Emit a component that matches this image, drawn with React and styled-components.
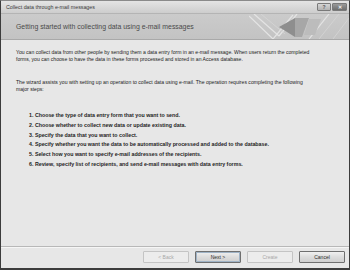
import styled, { createGlobalStyle } from 'styled-components'

const GlobalStyle = createGlobalStyle`
    html, body {
        margin: 0;
        padding: 0;
        background: #ffffff;
    }
`

const Window = styled.div`
    width: 350px;
    height: 270px;
    box-sizing: border-box;
    border: 1px solid #3c3c3c;
    border-top-color: #8a8a8a;
    border-bottom-width: 2px;
    background: #e7e7e7;
    display: flex;
    flex-direction: column;
    font-family: "Liberation Sans", Arial, sans-serif;
    overflow: hidden;
`

const TitleBar = styled.div`
    height: 12px;
    flex: none;
    display: flex;
    align-items: center;
    justify-content: space-between;
    padding: 0 2px 0 5px;
    background: linear-gradient(#e4e4e4, #cdcdcd);
`

const TitleText = styled.span`
    font-size: 5.3px;
    color: #3a3a3a;
`

const WindowButtons = styled.div`
    display: flex;
    gap: 1px;
`

const WindowButton = styled.div`
    width: ${({ $wide }) => ($wide ? 15 : 14)}px;
    height: 8px;
    box-sizing: border-box;
    border: 1px solid #7a7a7a;
    border-radius: 1px;
    background: ${({ $dark }) => ($dark ? 'linear-gradient(#9a9a9a, #6e6e6e)' : 'linear-gradient(#d6d6d6, #b2b2b2)')};
    color: ${({ $dark }) => ($dark ? '#f4f4f4' : '#555')};
    font-size: 5px;
    font-weight: bold;
    display: flex;
    align-items: center;
    justify-content: center;
    line-height: 1;
`

const Header = styled.div`
    height: 25px;
    flex: none;
    display: flex;
    align-items: center;
    justify-content: space-between;
    background: linear-gradient(#cbcbcb, #c3c3c3);
    border-top: 1px solid #b4b4b4;
    border-bottom: 1px solid #a9a9a9;
`

const HeaderTitle = styled.h1`
    margin: 0 0 0 15px;
    font-size: 6.9px;
    font-weight: normal;
    color: #4a4a4a;
    white-space: nowrap;
`

const HeaderArt = styled.svg`
    width: 100px;
    height: 25px;
    flex: none;
`

const Content = styled.div`
    flex: 1;
    padding: 9px 10px 0 15px;
    display: flex;
    flex-direction: column;
`

const Paragraph = styled.p`
    margin: 0 0 ${({ $gap }) => $gap}px;
    font-size: 5.1px;
    line-height: 7px;
    color: #222;
    white-space: nowrap;
`

const Steps = styled.ol`
    margin: 0;
    padding: 0 0 0 13px;
    list-style: none;
    display: flex;
    flex-direction: column;
    gap: 2.75px;
`

const Step = styled.li`
    font-size: 5.3px;
    line-height: 7px;
    font-weight: bold;
    color: #1e1e1e;
    white-space: nowrap;
`

const Footer = styled.div`
    height: 20px;
    flex: none;
    border-top: 1px solid #b8b8b8;
    box-shadow: inset 0 1px 0 #f6f6f6;
    display: flex;
    align-items: center;
    justify-content: flex-end;
    gap: 6px;
    padding: 0 4px 1px 0;
`

const Button = styled.button`
    width: 46px;
    height: 12px;
    box-sizing: border-box;
    padding: 0;
    border: 1px solid ${({ disabled }) => (disabled ? '#c4c4c4' : '#6f6f6f')};
    border-radius: 1px;
    background: ${({ disabled }) => (disabled ? '#ececec' : 'linear-gradient(#f0f0f0 0%, #dcdcdc 50%, #cfcfcf 100%)')};
    box-shadow: ${({ $default }) => ($default ? 'inset 0 0 0 1px #9fb3c6' : 'none')};
    color: ${({ disabled }) => (disabled ? '#a8a8a8' : '#2a2a2a')};
    font-family: "Liberation Sans", Arial, sans-serif;
    font-size: 5px;
    line-height: 1;
`

const steps = [
    '1. Choose the type of data entry form that you want to send.',
    '2. Choose whether to collect new data or update existing data.',
    '3. Specify the data that you want to collect.',
    '4. Specify whether you want the data to be automatically processed and added to the database.',
    '5. Select how you want to specify e-mail addresses of the recipients.',
    '6. Review, specify list of recipients, and send e-mail messages with data entry forms.',
]

function HeaderDecoration() {
    return (
        <HeaderArt viewBox="0 0 100 25">
            <g stroke="#e4e4e4" strokeWidth="1.2" fill="none">
                <path d="M0 2 L24 25" />
                <path d="M5 0 L30 22" />
                <path d="M24 25 L44 1" />
                <path d="M30 22 L48 0" />
                <path d="M60 25 L80 0" />
            </g>
            <g stroke="#d6d6d6" strokeWidth="0.8" fill="none">
                <path d="M12 0 L36 20" />
                <path d="M70 25 L90 0" />
                <path d="M84 25 L100 4" />
            </g>
            <polygon points="30,13 46,4 46,23" fill="#8e8e8e" />
            <polygon points="46,4 60,4 53,23 46,23" fill="#a7a7a7" />
            <polygon points="60,5 72,5 66,21 55,21" fill="#bcbcbc" />
        </HeaderArt>
    )
}

export default function App() {
    return (
        <>
            <GlobalStyle />
            <Window>
                <TitleBar>
                    <TitleText>Collect data through e-mail messages</TitleText>
                    <WindowButtons>
                        <WindowButton>?</WindowButton>
                        <WindowButton $wide $dark>✕</WindowButton>
                    </WindowButtons>
                </TitleBar>
                <Header>
                    <HeaderTitle>Getting started with collecting data using e-mail messages</HeaderTitle>
                    <HeaderDecoration />
                </Header>
                <Content>
                    <Paragraph $gap={16}>
                        You can collect data from other people by sending them a data entry form in an e-mail message. When users return the completed
                        <br />
                        forms, you can choose to have the data in these forms processed and stored in an Access database.
                    </Paragraph>
                    <Paragraph $gap={19}>
                        The wizard assists you with setting up an operation to collect data using e-mail. The operation requires completing the following
                        <br />
                        major steps:
                    </Paragraph>
                    <Steps>
                        {steps.map((step) => (
                            <Step key={step}>{step}</Step>
                        ))}
                    </Steps>
                </Content>
                <Footer>
                    <Button disabled>&lt; Back</Button>
                    <Button $default>Next &gt;</Button>
                    <Button disabled>Create</Button>
                    <Button>Cancel</Button>
                </Footer>
            </Window>
        </>
    )
}
